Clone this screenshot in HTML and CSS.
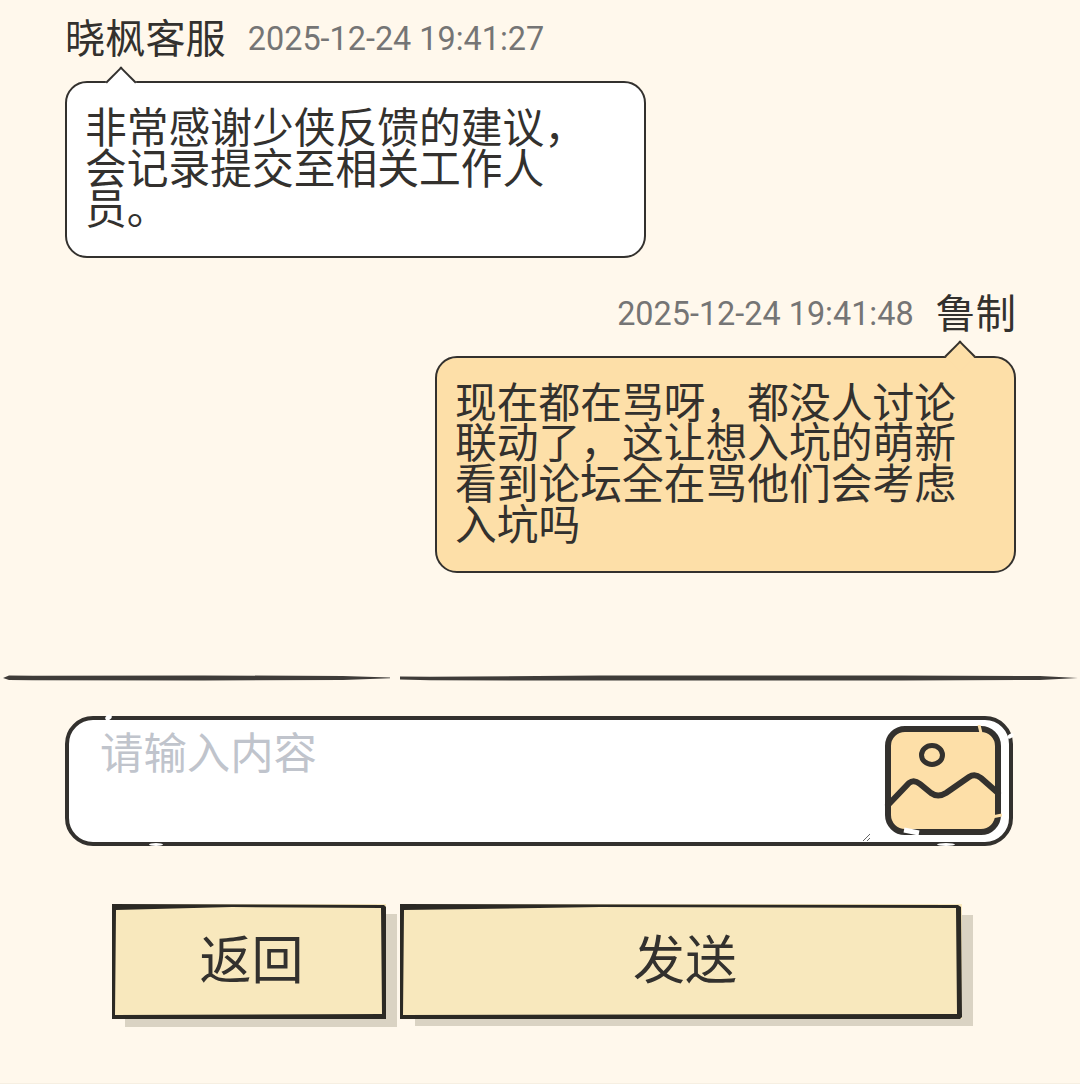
FILE: index.html
```html
<!DOCTYPE html>
<html lang="zh-CN">
<head>
  <meta charset="UTF-8" />
  <meta name="viewport" content="width=device-width, initial-scale=1" />
  <title>客服反馈</title>
  <link rel="stylesheet" href="styles.css">
</head>
<body>

  <section class="messages">
    <div class="msg">
      <div class="msg-head">
        <span class="msg-name">晓枫客服</span>
        <span class="msg-time">2025-12-24 19:41:27</span>
      </div>
      <div class="bubble">非常感谢少侠反馈的建议，会记录提交至相关工作人员。</div>
    </div>

    <div class="msg msg-self">
      <div class="msg-head">
        <span class="msg-time">2025-12-24 19:41:48</span>
        <span class="msg-name">鲁制</span>
      </div>
      <div class="bubble">现在都在骂呀，都没人讨论联动了，这让想入坑的萌新看到论坛全在骂他们会考虑入坑吗</div>
    </div>
  </section>

  <!-- 手绘分割线 -->
  <div class="divider">
    <svg class="divider-left" viewBox="0 0 387 8" preserveAspectRatio="none" aria-hidden="true">
      <path d="M0 4 L6 1.6 L30 1.8 L200 1.4 L340 2 L387 3.6 L387 4.2 L340 6 L200 6.4 L30 6.2 L6 6 Z" />
    </svg>
    <svg class="divider-right" viewBox="0 0 678 8" preserveAspectRatio="none" aria-hidden="true">
      <path d="M0 2.4 L30 2.8 L200 1.6 L500 1.4 L640 2 L678 4 L640 6 L500 6.6 L200 6.6 L30 6.2 L0 5.6 Z" />
    </svg>
  </div>

  <form class="composer">
    <div class="input-box">
      <textarea class="input-text" placeholder="请输入内容"></textarea>
      <button class="pic-btn" type="button" aria-label="上传图片">
        <svg viewBox="0 0 118 112" width="118" height="112" aria-hidden="true">
          <rect x="4" y="4" width="110" height="103" rx="17" fill="#fddfa8" stroke="#33312e" stroke-width="6" />
          <ellipse cx="48" cy="30" rx="10.5" ry="9.5" fill="none" stroke="#33312e" stroke-width="5" />
          <path d="M4 80 L25 58 Q30 54 36 59 L47 68 Q54 73 62 68 L85 52 Q91 48 97 53 L114 68" fill="none" stroke="#33312e" stroke-width="6" stroke-linecap="round" stroke-linejoin="round" />
          <path d="M95 0 L97 8 M108 92 L118 90" stroke="#fddfa8" stroke-width="3" />
          <path d="M20 105 L35 108" stroke="#fff" stroke-width="5" />
        </svg>
      </button>
      <span class="nick nick-top"></span>
      <span class="nick nick-bottom"></span>
      <span class="nick nick-bottom-right"></span>
      <span class="nick nick-right"></span>
    </div>

    <div class="actions">
      <button class="sketch-btn btn-back" type="button">
        <svg class="sketch-frame" viewBox="0 0 274 114" preserveAspectRatio="none" aria-hidden="true">
          <path d="M0 0 L272 1 L274 3 L275 112 L274 114 L0 114 L0 3 Z M4 6 L3 110 L270 109 L269 4 L120 3 Z" fill-rule="evenodd" />
        </svg>
        返回
      </button>
      <button class="sketch-btn btn-send" type="submit">
        <svg class="sketch-frame" viewBox="0 0 562 114" preserveAspectRatio="none" aria-hidden="true">
          <path d="M0 0 L558 1 L561 3 L562 112 L560 114 L0 114 L0 3 Z M4 6 L3 110 L557 109 L556 4 L200 3 Z" fill-rule="evenodd" />
        </svg>
        发送
      </button>
    </div>
  </form>

</body>
</html>
```

FILE: styles.css
```css
body {
  margin: 0;
  height: 1084px;
  overflow: hidden;
  box-sizing: border-box;
  border-bottom: 1px solid #f6efe2;
  background: #fff8ec;
  color: #33312e;
  font-family: "Noto Sans CJK SC", Roboto, sans-serif;
}

.messages {
  padding: 0 64px 0 65px;
  height: 664px;
  box-sizing: border-box;
}

.msg {
  width: 581px;
  margin-bottom: 17px;
}

.msg-self {
  margin-left: auto;
}

.msg-head {
  display: flex;
  align-items: center;
  gap: 22px;
  height: 81px;
  padding-bottom: 3px;
  box-sizing: border-box;
}

.msg-self .msg-head {
  justify-content: flex-end;
}

.msg-name {
  margin-bottom: 6px;
  font-size: 40.2px;
  line-height: 46px;
}

.msg-time {
  font-family: Roboto, sans-serif;
  font-size: 32.4px;
  color: #757575;
}

.bubble {
  position: relative;
  padding: 22px 25px 29px 18px;
  box-sizing: border-box;
  border: 2px solid #33312e;
  border-radius: 22px;
  background: #fff;
  font-size: 41.75px;
  line-height: 40.6px;
}

.bubble::before {
  content: "";
  position: absolute;
  top: -12.5px;
  left: 43px;
  width: 22px;
  height: 22px;
  box-sizing: border-box;
  border-top: 2px solid #33312e;
  border-left: 2px solid #33312e;
  background: inherit;
  transform: rotate(45deg);
}

.msg-self .bubble {
  background: #fddfa8;
}

.msg-self .bubble::before {
  left: auto;
  right: 43px;
}

.divider {
  display: flex;
  gap: 10px;
  padding: 10px 2px 0 3px;
  height: 8px;
  filter: blur(0.6px);
}

.divider svg {
  display: block;
  height: 8px;
  fill: #3f3c39;
}

.divider-left {
  width: 387px;
}

.divider-right {
  width: 678px;
}

.composer {
  padding: 34px 67px 0 65px;
}

.input-box {
  position: relative;
  display: flex;
  align-items: center;
  gap: 13px;
  height: 130px;
  padding-right: 7px;
  box-sizing: border-box;
  border: 4px solid #33312e;
  border-radius: 28px;
  background: #fff;
}

.input-text {
  flex: 1;
  height: 122px;
  padding: 5px 31px;
  box-sizing: border-box;
  border: none;
  outline: none;
  background: transparent;
  color: #33312e;
  font-family: inherit;
  font-size: 43.4px;
  line-height: 50px;
}

.input-text::placeholder {
  color: #c0c4cc;
}

.pic-btn {
  flex: none;
  width: 118px;
  height: 112px;
  padding: 0;
  border: none;
  background: none;
  cursor: pointer;
}

.pic-btn svg {
  display: block;
}

/* 边框上的小缺口，做出手绘的感觉 */
.nick {
  position: absolute;
  background: #fff;
  border-radius: 50%;
  transform: rotate(-35deg);
}

.nick-top {
  top: -5px;
  left: 36px;
  width: 7px;
  height: 5px;
}

.nick-bottom {
  bottom: -4px;
  left: 80px;
  width: 14px;
  height: 3px;
  transform: none;
}

.nick-bottom-right {
  bottom: -4px;
  right: 54px;
  width: 18px;
  height: 3px;
  transform: none;
}

.nick-right {
  top: 14px;
  right: -5px;
  width: 7px;
  height: 4px;
}

.actions {
  display: flex;
  gap: 14px;
  padding: 58px 0 0 47px;
}

.sketch-btn {
  position: relative;
  height: 115px;
  padding: 0 0 10px;
  border: none;
  background: #f8e8bd;
  color: #33312e;
  font-family: inherit;
  font-size: 52px;
  cursor: pointer;
}

.btn-back {
  width: 274px;
  padding-left: 5px;
  box-shadow: 12px 9px 0 -1px #dad3c3;
}

.btn-send {
  width: 562px;
  padding-left: 8px;
  box-shadow: 13px 9px 0 -2px #dad3c3;
}

.sketch-frame {
  position: absolute;
  top: 0;
  left: 0;
  width: 100%;
  height: 100%;
  fill: #2b2924;
}
```
